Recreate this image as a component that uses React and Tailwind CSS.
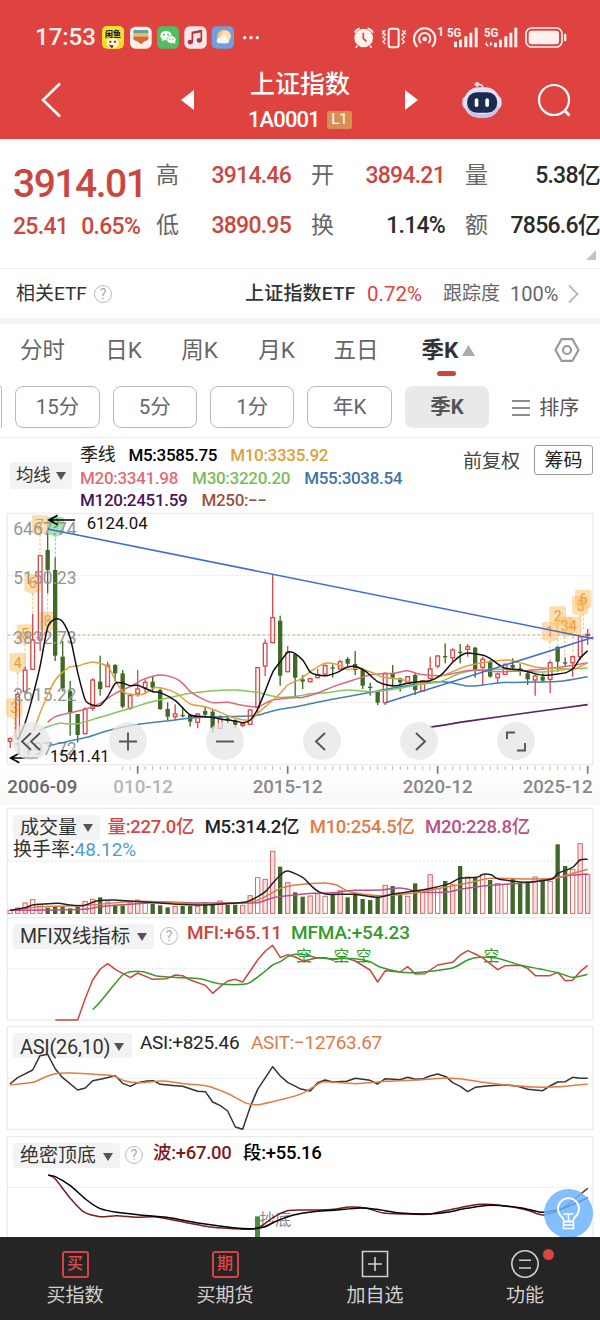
import React, { useState } from 'react';
import { clsx } from 'clsx';

// Chart coordinates are in thirds of a pixel, so every viewBox is 1800 wide.
const STEP = 22.5;
const xAt = (i) => 30.5 + i * STEP;

// [direction, body top, body bottom, high, low]
const CANDLES = [
  ['u', 686, 694, 682, 714], ['u', 553, 684, 545, 690], ['u', 480, 545, 470, 550], ['u', 390, 478, 312, 480],
  ['u', 137, 390, 137, 423], ['d', 120, 180, 70, 250], ['d', 180, 437, 142, 453], ['d', 440, 535, 393, 545],
  ['d', 543, 606, 513, 677], ['d', 612, 675, 612, 697], ['u', 597, 671, 592, 673], ['u', 510, 595, 505, 602],
  ['d', 515, 537, 437, 557], ['u', 466, 530, 455, 530], ['d', 465, 490, 462, 515], ['d', 490, 590, 480, 595],
  ['u', 557, 595, 550, 600], ['u', 537, 550, 480, 560], ['u', 517, 533, 508, 553], ['d', 515, 533, 498, 545],
  ['d', 540, 597, 535, 600], ['d', 597, 620, 577, 630], ['u', 612, 620, 583, 630], ['d', 615, 618, 590, 622],
  ['d', 615, 635, 612, 650], ['u', 612, 637, 610, 655], ['d', 603, 614, 590, 618], ['d', 605, 655, 600, 668],
  ['u', 622, 655, 615, 658], ['d', 625, 632, 615, 640], ['d', 632, 645, 628, 655], ['u', 641, 646, 638, 652],
  ['u', 600, 643, 597, 645], ['u', 473, 593, 471, 610], ['u', 400, 468, 388, 498], ['u', 323, 398, 195, 400],
  ['d', 332, 497, 317, 527], ['u', 427, 485, 408, 487], ['d', 433, 503, 430, 560], ['d', 508, 515, 495, 537],
  ['u', 506, 515, 504, 517], ['u', 495, 503, 477, 505], ['u', 467, 492, 463, 495], ['d', 472, 476, 463, 503],
  ['u', 455, 477, 450, 478], ['d', 447, 461, 441, 468], ['d', 462, 480, 423, 495], ['d', 477, 527, 473, 537],
  ['d', 530, 533, 518, 557], ['d', 543, 578, 543, 585], ['u', 490, 578, 487, 585], ['d', 490, 503, 465, 530],
  ['d', 505, 517, 503, 545], ['u', 500, 520, 498, 520], ['d', 495, 540, 490, 555], ['u', 512, 543, 510, 545],
  ['u', 477, 505, 440, 507], ['u', 438, 468, 436, 475], ['d', 438, 442, 400, 460], ['u', 420, 443, 415, 455],
  ['d', 425, 428, 402, 460], ['u', 410, 418, 402, 440], ['d', 413, 482, 411, 503], ['u', 448, 472, 440, 525],
  ['d', 453, 500, 450, 503], ['u', 492, 503, 488, 520], ['u', 463, 493, 460, 495], ['d', 465, 473, 445, 480],
  ['d', 475, 480, 462, 497], ['d', 490, 508, 487, 525], ['u', 498, 510, 492, 557], ['d', 500, 512, 490, 517],
  ['u', 458, 508, 452, 550], ['d', 410, 455, 410, 485], ['d', 457, 460, 442, 470], ['u', 440, 458, 437, 500],
  ['u', 380, 440, 378, 450], ['u', 373, 377, 357, 405],
];

// top edge of each volume bar, same order as the candles
const VOLUME_TOPS = [
  316, 308, 293, 283, 298, 308, 305, 305, 310, 306, 288, 282, 277, 290, 303, 302, 292, 284, 292, 297,
  301, 307, 303, 303, 303, 303, 292, 299, 287, 299, 299, 300, 271, 217, 222, 138, 185, 232, 262, 275,
  272, 265, 273, 270, 256, 277, 268, 282, 285, 275, 240, 243, 268, 273, 235, 262, 208, 250, 228, 238,
  183, 215, 218, 208, 225, 235, 237, 220, 233, 230, 215, 222, 228, 118, 183, 193, 115, 208,
];

const M5 = [[53, 690], [75, 640], [98, 560], [120, 470], [143, 352], [166, 327], [188, 335], [211, 385], [233, 487], [256, 570], [278, 585], [301, 586], [323, 560], [346, 520], [368, 519], [391, 527], [413, 526], [458, 545], [481, 548], [526, 572], [571, 615], [616, 620], [638, 622], [661, 627], [706, 633], [728, 638], [751, 630], [773, 597], [796, 542], [818, 487], [841, 455], [863, 427], [880, 428], [908, 450], [931, 487], [953, 495], [980, 497], [1010, 488], [1043, 471], [1070, 470], [1098, 485], [1133, 515], [1166, 526], [1190, 527], [1223, 520], [1256, 515], [1290, 512], [1323, 495], [1358, 457], [1385, 435], [1405, 429], [1450, 436], [1471, 446], [1498, 465], [1516, 475], [1561, 480], [1590, 487], [1630, 496], [1673, 492], [1700, 487], [1720, 475], [1740, 445], [1763, 422]];
const M10 = [[100, 665], [120, 610], [143, 555], [166, 510], [188, 487], [211, 470], [233, 468], [278, 456], [323, 470], [346, 510], [368, 545], [391, 553], [413, 555], [436, 550], [458, 535], [481, 533], [526, 548], [571, 582], [616, 590], [661, 607], [706, 625], [751, 630], [773, 610], [796, 590], [841, 550], [863, 525], [900, 508], [931, 485], [975, 460], [1010, 463], [1043, 478], [1070, 475], [1110, 485], [1150, 502], [1200, 508], [1256, 520], [1300, 507], [1358, 485], [1400, 468], [1450, 458], [1520, 450], [1560, 458], [1610, 472], [1673, 475], [1720, 478], [1763, 458]];
const M20 = [[143, 637], [166, 620], [211, 608], [256, 598], [300, 580], [346, 550], [390, 530], [430, 508], [481, 495], [526, 505], [548, 520], [571, 545], [600, 563], [638, 578], [683, 577], [728, 586], [773, 590], [818, 570], [886, 563], [905, 563], [950, 550], [1000, 530], [1060, 510], [1120, 493], [1180, 490], [1223, 482], [1260, 493], [1320, 497], [1370, 488], [1420, 480], [1500, 485], [1600, 480], [1680, 472], [1763, 458]];
const M30 = [[120, 660], [143, 650], [180, 640], [230, 642], [290, 625], [350, 607], [400, 592], [450, 577], [500, 565], [570, 550], [640, 542], [705, 540], [770, 547], [840, 562], [900, 557], [930, 551], [980, 548], [1040, 540], [1120, 545], [1200, 535], [1260, 523], [1320, 515], [1380, 490], [1430, 480], [1520, 478], [1600, 485], [1640, 485], [1700, 478], [1763, 474]];
const M55 = [[143, 708], [200, 695], [260, 682], [320, 663], [400, 645], [500, 633], [600, 622], [680, 620], [770, 616], [800, 608], [840, 598], [900, 588], [960, 575], [1040, 560], [1120, 545], [1200, 530], [1280, 518], [1340, 516], [1400, 528], [1450, 525], [1500, 518], [1600, 516], [1680, 514], [1763, 500]];
const M120 = [[1290, 652], [1400, 634], [1600, 606], [1763, 584]];

const VOL5 = [[30, 316], [75, 308], [98, 300], [130, 297], [175, 295], [210, 300], [250, 302], [290, 288], [340, 285], [390, 288], [450, 292], [520, 297], [600, 300], [680, 296], [740, 290], [773, 275], [796, 260], [818, 235], [841, 210], [863, 198], [908, 217], [931, 240], [953, 258], [980, 268], [1060, 268], [1133, 277], [1180, 267], [1260, 256], [1300, 248], [1350, 235], [1380, 220], [1430, 217], [1450, 208], [1475, 210], [1495, 222], [1580, 232], [1655, 222], [1673, 205], [1718, 187], [1740, 165], [1763, 163]];
const VOL10 = [[30, 316], [120, 305], [200, 303], [300, 298], [380, 290], [480, 290], [580, 296], [700, 295], [760, 290], [796, 275], [841, 250], [886, 240], [930, 236], [975, 234], [1010, 240], [1043, 258], [1090, 268], [1150, 272], [1240, 265], [1320, 250], [1400, 235], [1475, 220], [1600, 222], [1673, 218], [1718, 205], [1763, 193]];
const VOL20 = [[30, 316], [130, 315], [250, 313], [300, 305], [400, 297], [500, 292], [600, 294], [700, 294], [773, 293], [820, 278], [886, 270], [940, 265], [1000, 263], [1060, 256], [1140, 255], [1200, 249], [1260, 260], [1330, 262], [1400, 250], [1480, 240], [1560, 235], [1640, 225], [1700, 212], [1763, 207]];

const MFI = [[166, 645], [233, 645], [256, 580], [278, 525], [301, 492], [323, 476], [346, 493], [391, 518], [413, 504], [458, 523], [500, 521], [526, 510], [548, 512], [571, 525], [616, 541], [638, 565], [661, 545], [683, 528], [706, 523], [728, 531], [773, 465], [796, 438], [818, 421], [841, 458], [863, 449], [886, 456], [910, 468], [953, 458], [975, 458], [998, 465], [1021, 459], [1040, 460], [1066, 468], [1110, 495], [1133, 531], [1156, 497], [1200, 501], [1223, 485], [1246, 507], [1275, 506], [1313, 480], [1358, 472], [1381, 450], [1403, 437], [1426, 447], [1450, 460], [1493, 494], [1516, 482], [1560, 481], [1583, 490], [1606, 512], [1650, 512], [1673, 502], [1696, 527], [1718, 526], [1740, 500], [1763, 481]];
const MFMA = [[278, 614], [301, 590], [346, 535], [368, 510], [391, 500], [430, 500], [470, 513], [520, 517], [600, 521], [638, 532], [670, 538], [730, 538], [751, 532], [790, 503], [818, 480], [841, 470], [863, 455], [886, 448], [920, 450], [950, 458], [1000, 461], [1066, 461], [1110, 470], [1140, 486], [1200, 501], [1240, 503], [1290, 499], [1360, 488], [1403, 465], [1440, 457], [1493, 460], [1560, 480], [1620, 492], [1673, 503], [1718, 517], [1763, 508]];

const ASI = [[30, 177], [53, 158], [98, 135], [120, 92], [143, 88], [166, 132], [188, 158], [233, 195], [256, 189], [278, 167], [301, 163], [346, 152], [368, 175], [391, 184], [413, 173], [440, 168], [460, 167], [481, 178], [526, 182], [548, 184], [593, 199], [616, 200], [638, 231], [661, 242], [683, 258], [706, 306], [728, 313], [751, 245], [773, 193], [818, 125], [841, 153], [863, 172], [900, 191], [931, 198], [953, 173], [975, 165], [998, 171], [1040, 169], [1066, 160], [1110, 166], [1133, 177], [1156, 161], [1200, 164], [1223, 157], [1246, 163], [1270, 161], [1290, 153], [1313, 147], [1338, 155], [1358, 173], [1381, 184], [1403, 200], [1426, 187], [1460, 183], [1510, 179], [1550, 183], [1583, 193], [1628, 197], [1650, 183], [1673, 171], [1696, 170], [1718, 157], [1740, 160], [1763, 160]];
const ASIT = [[30, 180], [98, 172], [143, 153], [175, 145], [210, 144], [300, 149], [340, 153], [375, 168], [420, 173], [490, 168], [560, 177], [620, 183], [680, 204], [740, 235], [775, 239], [810, 232], [900, 208], [950, 180], [975, 170], [1066, 176], [1160, 169], [1250, 165], [1330, 160], [1380, 161], [1450, 172], [1520, 180], [1600, 186], [1680, 185], [1763, 177]];

const WAVE = [[145, 450], [166, 462], [211, 520], [250, 560], [300, 575], [350, 572], [410, 577], [470, 576], [560, 593], [630, 606], [700, 611], [750, 613], [780, 606], [820, 577], [860, 558], [900, 555], [950, 555], [1000, 553], [1050, 546], [1100, 550], [1150, 564], [1220, 567], [1280, 568], [1320, 560], [1380, 548], [1440, 538], [1510, 542], [1580, 555], [1628, 570], [1680, 555], [1720, 525], [1763, 490]];
const SEGMENT = [[145, 450], [166, 455], [211, 482], [260, 525], [301, 551], [350, 562], [420, 570], [500, 577], [600, 595], [700, 608], [750, 611], [790, 607], [830, 588], [880, 570], [940, 560], [1000, 556], [1080, 549], [1130, 553], [1200, 564], [1290, 567], [1340, 562], [1400, 550], [1470, 541], [1560, 548], [1628, 562], [1680, 553], [1720, 538], [1763, 518]];

// [label, x, y, stem end]
const MARKS = [
  ['3', 43, 594, 680], ['4', 53, 458, 545], ['5', 75, 372, 470], ['6', 98, 220, 312],
  ['7', 120, 44, 137], ['8', 143, 334, 250], ['1', 1650, 365, 452], ['2', 1673, 318, 410],
  ['3', 1694, 349, 442], ['4', 1719, 349, 437], ['5', 1741, 287, 378], ['6', 1750, 268, 357],
];

const smooth = (pts) => {
  let d = `M${pts[0][0]} ${pts[0][1]}`;
  for (let i = 0; i < pts.length - 1; i++) {
    const a = pts[i - 1] || pts[i];
    const b = pts[i];
    const c = pts[i + 1];
    const e = pts[i + 2] || c;
    d += `C${b[0] + (c[0] - a[0]) / 8} ${b[1] + (c[1] - a[1]) / 8} ${c[0] - (e[0] - b[0]) / 8} ${c[1] - (e[1] - b[1]) / 8} ${c[0]} ${c[1]}`;
  }
  return d;
};

const straight = (pts) => 'M' + pts.map((p) => p.join(' ')).join('L');

const Line = ({ pts, color, width = 4.5, sharp }) => (
  <path d={sharp ? straight(pts) : smooth(pts)} fill="none" stroke={color} strokeWidth={width} strokeLinejoin="round" />
);

const GridLine = ({ y }) => <path d={`M22 ${y}H1778`} stroke="#e2e2e2" strokeWidth="3" strokeDasharray="6 6" />;

const AppIcons = () => (
  <svg viewBox="300 66 500 84" className="h-7 w-[166.7px]">
    <rect x="306" y="75" width="66" height="68" rx="15" fill="#f5e334" />
    <path d="M308 131c0-22 60-24 62 0q-6 13-31 12-25 1-31-12z" fill="#ffd21f" />
    <ellipse cx="338" cy="126" rx="19" ry="16" fill="#fff5cf" />
    <text x="339" y="107" fontSize="24" fontWeight="900" textAnchor="middle" fill="#222">闲鱼</text>
    <circle cx="331" cy="122" r="3" fill="#222" />
    <circle cx="345" cy="122" r="3" fill="#222" />
    <path d="M326 130q10 6 16 2l-5 9q-6 0-11-11z" fill="#5a2a12" />
    <rect x="390" y="77" width="65" height="66" rx="16" fill="#fdeee7" />
    <rect x="400" y="87" width="45" height="10" rx="3" fill="#5aa5a3" />
    <path d="M400 96h45v14h-45z" fill="#f1b765" />
    <path d="M400 107h45v8q-3 4-11 6l-11 9-11-9q-9-2-12-6z" fill="#d3683c" />
    <rect x="471" y="76" width="66" height="67" rx="15" fill="#52bd62" />
    <ellipse cx="498" cy="104" rx="17" ry="14" fill="#fff" />
    <path d="M487 113l-1 8 9-5z" fill="#fff" />
    <ellipse cx="514" cy="116" rx="14" ry="11.500" fill="#fff" stroke="#52bd62" strokeWidth="2" />
    <path d="M520 124l6 6-1-9z" fill="#fff" />
    <g fill="#3f9f4e">
      <circle cx="492" cy="101" r="2.500" />
      <circle cx="504" cy="101" r="2.500" />
      <circle cx="510" cy="114" r="2" />
      <circle cx="519" cy="114" r="2" />
    </g>
    <rect x="553" y="76" width="67" height="67" rx="16" fill="#fbe7ea" />
    <path d="M577 122V94l27-5v28" fill="none" stroke="#b8343f" strokeWidth="5" />
    <path d="M577 99l27-5v-6l-27 5z" fill="#b8343f" />
    <ellipse cx="571" cy="123" rx="8" ry="7" fill="#b8343f" />
    <ellipse cx="598" cy="118" rx="8" ry="7" fill="#b8343f" />
    <rect x="635" y="76" width="67" height="67" rx="15" fill="#6f9fe0" />
    <circle cx="672" cy="107" r="21" fill="#f4c272" />
    <circle cx="677" cy="104" r="15" fill="#fbe0ab" />
    <path d="M655 127a9 9 0 0 1 3-17 13 13 0 0 1 24 3 8 8 0 0 1 1 14z" fill="#f3f4f8" />
    <circle cx="734" cy="110" r="5" fill="#fff" />
    <circle cx="753" cy="110" r="5" fill="#fff" />
    <circle cx="772" cy="110" r="5" fill="#fff" />
  </svg>
);

const SystemIcons = () => (
  <svg viewBox="150 66 660 84" className="h-7 w-[220px]" fill="#fff1f0">
    <circle cx="191" cy="111" r="28" />
    <path d="M190 95v17l9 9" fill="none" stroke="#de433f" strokeWidth="5" />
    <path d="M164 95q4-10 15-13M203 82q12 3 16 13M172 134l-5 6M210 134l5 6" fill="none" stroke="#fff1f0" strokeWidth="5" />
    <rect x="266" y="83" width="30" height="56" rx="7" fill="none" stroke="#fff1f0" strokeWidth="6" />
    <path d="M256 88l-7 6 7 7-7 7 7 7-7 7 7 7M247 88l4 6-4 6M306 88l7 6-7 7 7 7-7 7 7 7-7 7M317 88l-4 6 4 6" fill="none" stroke="#fff1f0" strokeWidth="4" />
    <circle cx="374" cy="114" r="7" />
    <path d="M363 126a17 17 0 1 1 22 0M352 137a32 32 0 1 1 44 0" fill="none" stroke="#fff1f0" strokeWidth="6" />
    <text x="411" y="104" fontSize="38" fontWeight="700">1</text>
    <text x="441" y="108" fontSize="39" fontWeight="700" textLength="43" lengthAdjust="spacingAndGlyphs">5G</text>
    <path d="M462 122h9v17h-9zM477 116h9v23h-9zM493 106h9v33h-9zM508 95h9v44h-9zM524 80h9v59h-9z" />
    <text x="552" y="108" fontSize="39" fontWeight="700" textLength="43" lengthAdjust="spacingAndGlyphs">5G</text>
    <path d="M555 130h10v9zM561 120v12h-7zM570 122l8 7-8 7zM582 125h9v14h-9zM597 116h9v23h-9zM613 106h9v33h-9zM628 95h9v44h-9zM643 80h9v59h-9z" />
    <rect x="678" y="81" width="108" height="57" rx="17" fill="none" stroke="#fff1f0" strokeWidth="5" />
    <rect x="686" y="89" width="91" height="41" rx="9" />
    <rect x="792" y="98" width="7" height="23" rx="3" />
  </svg>
);

const Robot = () => (
  <svg viewBox="0 0 120 112" className="h-[37px] w-10">
    <path d="M62 18q0-12-12-10" fill="none" stroke="#f3dfe6" strokeWidth="5" />
    <circle cx="45" cy="7" r="7" fill="#f5e3e8" />
    <ellipse cx="9" cy="62" rx="9" ry="18" fill="#d5d3f2" />
    <ellipse cx="111" cy="62" rx="9" ry="18" fill="#d5d3f2" />
    <rect x="5" y="16" width="110" height="92" rx="45" fill="#e3e3f8" />
    <path d="M12 68q4 40 50 40t48-40q-8 30-48 30t-50-30z" fill="#c3c2f2" />
    <rect x="15" y="31" width="91" height="62" rx="29" fill="#1d2b50" />
    <rect x="38" y="49" width="11" height="27" rx="5.500" fill="#fff" />
    <rect x="70" y="49" width="11" height="27" rx="5.500" fill="#fff" />
  </svg>
);

const Header = () => (
  <header className="h-[139px] bg-[#de433f] text-white">
    <div className="flex h-16 items-center pt-[9px]">
      <span className="ml-[35px] w-[65px] text-[24px] leading-none font-medium text-[#fff1f0]">17:53</span>
      <AppIcons />
      <div className="ml-auto pr-[30px]">
        <SystemIcons />
      </div>
    </div>
    <div className="flex h-[72px] items-center pl-[41px]">
      <svg viewBox="0 0 20 36" className="h-9 w-5" fill="none" stroke="white" strokeWidth="2.600">
        <path d="M19 1.500 2 18l17 16.500" />
      </svg>
      <svg viewBox="0 0 13 20" className="ml-[120px] h-5 w-[13px]" fill="white">
        <path d="M13 0v20L0 10z" />
      </svg>
      <div className="ml-[46px] flex w-[120px] flex-col items-center pt-[5px]">
        <h1 className="text-[25px] leading-9 font-medium">上证指数</h1>
        <div className="flex h-9 w-[104px] items-center justify-between pb-[2px]">
          <span className="pt-px text-[22px] leading-none font-medium tracking-[-0.9px]">1A0001</span>
          <span className="flex h-[18px] w-[25px] items-center justify-center rounded-[2px] bg-[#d88f53] text-[15px] leading-none">L1</span>
        </div>
      </div>
      <svg viewBox="0 0 13 20" className="ml-[45px] h-5 w-[13px]" fill="white">
        <path d="M0 0v20l13-10z" />
      </svg>
      <div className="ml-11">
        <Robot />
      </div>
      <svg viewBox="0 0 35 35" className="ml-[35px] h-[35px] w-[35px]" fill="none" stroke="white" strokeWidth="2.200">
        <circle cx="17" cy="17" r="15" />
        <path d="m27 27 5.500 5.500" strokeWidth="2.800" />
      </svg>
    </div>
  </header>
);

const QUOTES = [
  [
    { label: '高', value: '3914.46', up: true },
    { label: '低', value: '3890.95', up: true },
  ],
  [
    { label: '开', value: '3894.21', up: true },
    { label: '换', value: '1.14%' },
  ],
  [
    { label: '量', value: '5.38亿' },
    { label: '额', value: '7856.6亿' },
  ],
];

const Quote = () => (
  <section className="h-[129px] bg-white pt-3">
    <div className="flex h-[99px]">
      <div className="w-[156px] pl-[13px] font-medium text-[#ca473f]">
        <div className="h-[53px] pt-[14px] text-[39px] leading-[39px] tracking-[-1.5px]">3914.01</div>
        <div className="flex h-[47px] items-center gap-[13px] text-[23px] tracking-[-0.7px]">
          <span>25.41</span>
          <span>0.65%</span>
        </div>
      </div>
      <div className="flex gap-5">
        {QUOTES.map((col, i) => (
          <div key={i} className={i === 1 ? 'w-[134px]' : 'w-[135px]'}>
            {col.map((q) => (
              <div key={q.label} className="flex h-[50px] items-center justify-between">
                <span className="text-[23px] text-[#666]">{q.label}</span>
                <span
                  className={clsx(
                    'pt-px text-[23px] font-medium tracking-[-0.75px]',
                    q.up ? 'text-[#ca473f]' : 'text-[#2b2b2b]'
                  )}
                >
                  {q.value}
                </span>
              </div>
            ))}
          </div>
        ))}
      </div>
    </div>
    <svg viewBox="0 0 10 10" className="ml-[586px] h-[10px] w-[10px]" fill="#c4c4c4">
      <path d="M10 0v10H0z" />
    </svg>
  </section>
);

const Help = () => (
  <span className="flex h-[18px] w-[18px] items-center justify-center rounded-full border border-[#bbb] text-[14px] leading-none font-normal text-[#aaa]">
    ?
  </span>
);

const EtfRow = () => (
  <section className="flex h-[50px] items-center border-t border-[#eee] bg-white pt-px pl-4 text-[19px] whitespace-nowrap text-[#333]">
    <span className="w-[78px]">相关ETF</span>
    <Help />
    <span className="ml-[133px] w-[122px] font-medium tracking-[0.2px]">上证指数ETF</span>
    <span className="w-[76px] text-[20.500px] text-[#de433f]">0.72%</span>
    <span className="w-[67px] text-[#666]">跟踪度</span>
    <span className="w-[58px] text-[20px] text-[#666]">100%</span>
    <svg viewBox="0 0 11 20" className="h-5 w-[11px]" fill="none" stroke="#bbb" strokeWidth="2">
      <path d="m1 1.500 8.500 8.500L1 18.500" />
    </svg>
  </section>
);

const TABS = [
  { name: '分时', width: 'w-[85px]' },
  { name: '日K', width: 'w-[77px]' },
  { name: '周K', width: 'w-[75px]' },
  { name: '月K', width: 'w-[79px]' },
  { name: '五日', width: 'w-[80px]' },
  { name: '季K', width: 'w-[105px]' },
];
const PERIODS = ['15分', '5分', '1分', '年K', '季K'];

const PeriodTabs = () => {
  const [active, setActive] = useState('季K');

  return (
    <section className="h-[114px] border-b border-[#eee] bg-white">
      <div className="flex h-[56px] items-start">
        {TABS.map((tab) => (
          <button
            key={tab.name}
            onClick={() => setActive(tab.name)}
            className={clsx(
              'flex flex-col items-center text-[22.500px]',
              tab.width,
              tab.name === active ? 'font-bold text-[#333]' : 'text-[#666]'
            )}
          >
            <span className="flex h-[47px] items-center gap-[4px] pt-[6px]">
              {tab.name}
              {tab.name === '季K' && (
                <svg viewBox="0 0 13 11" className="h-[11px] w-[13px]" fill="#aaa">
                  <path d="M6.500 0 13 11H0z" />
                </svg>
              )}
            </span>
            {tab.name === active && <span className="mr-[4px] h-[5px] w-[19px] rounded-full bg-[#ca473f]" />}
          </button>
        ))}
        <svg viewBox="0 0 26 24" className="mt-[14px] ml-[53px] h-6 w-[26px]" fill="none" stroke="#999" strokeWidth="2.200">
          <path d="M7.500 1.200h11L24.500 12l-6 10.800h-11L1.500 12z" strokeLinejoin="round" />
          <circle cx="13" cy="12" r="4" />
        </svg>
      </div>
      <div className="flex h-[54px] items-start gap-[12.900px] overflow-hidden pt-[6px]">
        <span className="h-[42px] w-[2.300px] shrink-0 rounded-r-lg border border-l-0 border-[#bbb]" />
        {PERIODS.map((p) => (
          <button
            key={p}
            onClick={() => setActive(p)}
            className={clsx(
              'h-[42px] w-[84.500px] shrink-0 rounded-lg pt-px text-[20.500px]',
              p === active ? 'bg-[#e9e9e9] font-bold text-[#555]' : 'border border-[#bbb] text-[#666]'
            )}
          >
            {p}
          </button>
        ))}
        <button className="ml-[10px] flex h-[42px] items-center gap-[9px] pt-px text-[20px] text-[#555]">
          <svg viewBox="0 0 18 16" className="h-4 w-[18px]" stroke="#666" strokeWidth="1.600">
            <path d="M0 1h18M0 8h18M0 15h18" />
          </svg>
          排序
        </button>
      </div>
    </section>
  );
};

const Picker = ({ label, className }) => (
  <button className={clsx('flex shrink-0 items-center justify-between rounded-[3px] bg-[#f2f2f2]/90 whitespace-nowrap text-[#333]', className)}>
    {label}
    <svg viewBox="0 0 10 8" className="h-2 w-[10px]" fill="#555">
      <path d="M0 0h10L5 8z" />
    </svg>
  </button>
);

const MaLegend = () => (
  <div className="flex h-[72px] bg-white pl-[10px] text-[17px] font-medium tracking-[-0.3px] whitespace-nowrap">
    <Picker label="均线" className="mt-6 h-[27px] w-[62px] px-[6px] text-[17.500px] font-normal" />
    <div className="ml-2 w-[383px] pt-[6px] leading-[22.500px]">
      <div className="flex gap-[13px]">
        <span className="text-[18px] font-normal text-[#222]">季线</span>
        <span className="text-black">M5:3585.75</span>
        <span className="text-[#dda03c]">M10:3335.92</span>
      </div>
      <div className="flex gap-[14px]">
        <span className="text-[#e06c78]">M20:3341.98</span>
        <span className="text-[#7cbb5a]">M30:3220.20</span>
        <span className="text-[#4173a5]">M55:3038.54</span>
      </div>
      <div className="flex gap-[14px]">
        <span className="text-[#48155a]">M120:2451.59</span>
        <span className="text-[#9b523c]">M250:−−</span>
      </div>
    </div>
    <span className="pt-[10px] text-[19px] leading-7 font-normal tracking-normal text-[#444]">前复权</span>
    <button className="mt-[7px] ml-[14px] h-[30px] w-[59px] rounded-[3px] border border-[#999] pt-px text-[19px] leading-none font-normal tracking-normal text-[#222]">
      筹码
    </button>
  </div>
);

const Candle = ({ i, dir, top, bottom, high, low }) => {
  const x = xAt(i);
  const h = Math.max(bottom - top, 4);
  return dir === 'u' ? (
    <g stroke="#d94a4a" strokeWidth="4" fill="none">
      <path d={`M${x} ${high}V${top}M${x} ${top + h}V${low}`} />
      <rect x={x - 5.5} y={top} width="11" height={h} />
    </g>
  ) : (
    <g fill="#3f6a26">
      <rect x={x - 2} y={high} width="4" height={low - high} />
      <rect x={x - 6.5} y={top} width="13" height={h} />
    </g>
  );
};

const Mark = ({ label, x, y, stem }) => (
  <g>
    <path d={`M${x} ${y + 30}V${stem}`} stroke="#f2c47c" strokeWidth="3" strokeDasharray="8 5" />
    <path
      d={`M${x - 19} ${y - 29}h38q6 0 6 6v42q0 6-6 7l-12 3-7 6-7-6-12-3q-6-1-6-7v-42q0-6 6-6z`}
      fill="#f9bd5d"
      fillOpacity="0.480"
    />
    <text x={x} y={y + 15} fontSize="42" textAnchor="middle" fill="#ec9a3e">{label}</text>
  </g>
);

const AXIS_LABELS = [['6467.74', 74], ['5150.23', 223], ['3832.73', 403], ['2615.22', 574], ['1197.72', 735]];
const DATES = [['2006-09', 22, 210, '#666'], ['010-12', 340, 179, '#b5b5b5'], ['2015-12', 758, 210, '#888'], ['2020-12', 1208, 210, '#888'], ['2025-12', 1568, 210, '#888']];

const CONTROLS = [
  'M19 11 10 19.500l9 8.500M28 11l-9 8.500 9 8.500',
  'M10 19.500h18M19 10.500v18',
  'M10 19.500h18',
  'M22 11l-9 8.500 9 8.500',
  'M16 11l9 8.500-9 8.500',
  'M10 17v-6.500h8M28 21v7.500h-8',
];

const MainChart = () => (
  <div className="grid h-[295px] bg-white">
    <svg viewBox="0 0 1800 885" className="col-start-1 row-start-1 h-[295px] w-[600px]">
      <defs>
        <linearGradient id="axisFade" x1="0" y1="0" x2="0" y2="1">
          <stop offset="0" stopColor="#fff" />
          <stop offset="1" stopColor="#f8f8f8" />
        </linearGradient>
      </defs>
      <rect x="0" y="768" width="1800" height="117" fill="url(#axisFade)" />
      <rect x="22" y="10" width="1757" height="754" fill="#fff" stroke="#ececec" strokeWidth="4" />
      {[197, 386, 577].map((y) => (
        <GridLine key={y} y={y} />
      ))}
      <path d="M22 375H1778" stroke="#d3bfa0" strokeWidth="4" strokeDasharray="9 6" />
      {MARKS.map(([label, x, y, stem], i) => (
        <Mark key={i} label={label} x={x} y={y} stem={stem} />
      ))}
      <path d="M166 85V142" stroke="#7fd28c" strokeWidth="3" strokeDasharray="8 5" />
      <path d="M141 27q0-6 6-6h39q6 0 6 6v40q0 6-6 7l-13 3-7 7-7-7-12-3q-6-1-6-7z" fill="#6fd07e" fillOpacity="0.600" />
      <text x="166" y="54" fontSize="42" textAnchor="middle" fill="#36b34c">9</text>
      {CANDLES.map(([dir, top, bottom, high, low], i) => (
        <Candle key={i} i={i} dir={dir} top={top} bottom={bottom} high={high} low={low} />
      ))}
      <g fontSize="53" fill="#959595">
        {AXIS_LABELS.map(([label, y]) => (
          <text key={label} x="40" y={y} textLength="190" lengthAdjust="spacingAndGlyphs">{label}</text>
        ))}
      </g>
      <Line pts={M120} color="#4d2560" width={5} />
      <Line pts={M55} color="#4580b0" />
      <Line pts={M30} color="#84c75e" />
      <Line pts={M20} color="#e0667a" />
      <Line pts={M10} color="#e0a03c" />
      <Line pts={M5} color="#111" />
      <path d="M143 57 1780 386M1156 578 1780 382" stroke="#426bd2" strokeWidth="4.500" />
      <path d="M225 30H148M173 16 147 30l26 14" fill="none" stroke="#000" strokeWidth="5" />
      <path d="M113 744H33M58 730 32 744l26 14" fill="none" stroke="#000" strokeWidth="5" />
      <text x="260" y="58" fontSize="50" textLength="183" lengthAdjust="spacingAndGlyphs" fill="#111">6124.04</text>
      <text x="150" y="757" fontSize="50" textLength="178" lengthAdjust="spacingAndGlyphs" fill="#111">1541.41</text>
      {CANDLES.map((_, i) => {
        if (i < 15) return null;
        const major = (i - 17) % 20 === 0;
        return <path key={i} d={`M${xAt(i)} 768v${major ? 23 : 12}`} stroke={major ? '#777' : '#bbb'} strokeWidth={major ? 5 : 3} />;
      })}
      {DATES.map(([label, x, len, color]) => (
        <text key={label} x={x} y="850" fontSize="53" fontWeight="500" textLength={len} lengthAdjust="spacingAndGlyphs" fill={color}>
          {label}
        </text>
      ))}
    </svg>
    <div className="col-start-1 row-start-1 mt-[212px] flex h-[38px] gap-[59px] pl-[12px]">
      {CONTROLS.map((d) => (
        <button key={d} className="h-[38px] w-[38px] rounded-full bg-[#e6e6e6]/75">
          <svg viewBox="0 0 38 38" className="h-[38px] w-[38px]" fill="none" stroke="#555" strokeWidth="1.900">
            <path d={d} />
          </svg>
        </button>
      ))}
    </div>
  </div>
);

const VolumePanel = () => (
  <div className="grid h-[112px] bg-white">
    <svg viewBox="0 0 1800 336" className="col-start-1 row-start-1 h-[112px] w-[600px]">
      <path d="M22 336V10H1779V336" fill="none" stroke="#ececec" strokeWidth="4" />
      <GridLine y={168} />
      {VOLUME_TOPS.map((top, i) =>
        CANDLES[i][0] === 'u' ? (
          <rect key={i} x={xAt(i) - 6.5} y={top + 1} width="13" height={324 - top} fill={i % 3 ? '#f9dfdf' : '#fff'} stroke="#d86666" strokeWidth="3" />
        ) : (
          <rect key={i} x={xAt(i) - 6.5} y={top} width="13" height={327 - top} fill="#41672a" />
        )
      )}
      <Line pts={VOL20} color="#b84f86" />
      <Line pts={VOL10} color="#e07b48" />
      <Line pts={VOL5} color="#222" />
    </svg>
    <div className="col-start-1 row-start-1 pt-[10px] pl-[13px] text-[19px] leading-[25px] whitespace-nowrap">
      <div className="flex h-[23px] items-center gap-[10.500px] pt-[2px] text-[18.500px] font-medium tracking-[-0.3px]">
        <Picker label="成交量" className="h-[25px] w-[87px] pr-[7px] pl-[7px] text-[19px] font-normal tracking-normal" />
        <span className="-ml-[3px] text-[#d64843]">量:227.0亿</span>
        <span className="text-[#222]">M5:314.2亿</span>
        <span className="text-[#e07b48]">M10:254.5亿</span>
        <span className="text-[#b84f86]">M20:228.8亿</span>
      </div>
      <div className="leading-[23px] text-[#333]">
        换手率:<span className="text-[#509bdc]">48.12%</span>
      </div>
    </div>
  </div>
);

const MfiPanel = () => (
  <div className="grid h-[108px] bg-white">
    <svg viewBox="0 336 1800 324" className="col-start-1 row-start-1 h-[108px] w-[600px]">
      <rect x="22" y="338" width="1757" height="307" fill="none" stroke="#ececec" strokeWidth="4" />
      <GridLine y={491} />
      <Line pts={MFI} color="#cc4641" sharp />
      <Line pts={MFMA} color="#359a2d" />
      {[912, 1024, 1091, 1474].map((x) => (
        <g key={x}>
          <text x={x} y="468" fontSize="46" textAnchor="middle" fill="#359a2d">空</text>
          <path d={`M${x - 22} 471h44`} stroke="#359a2d" strokeWidth="3" strokeDasharray="12 4" />
        </g>
      ))}
    </svg>
    <div className="col-start-1 row-start-1 flex items-start pt-[7px] pl-[13px] text-[19px] font-medium tracking-[-0.15px] whitespace-nowrap">
      <Picker label="MFI双线指标" className="h-[25px] w-[141px] px-[7px] text-[19.500px] font-normal" />
      <span className="mt-[3px] ml-[6px]">
        <Help />
      </span>
      <span className="-mt-[5px] ml-[9px] w-[104px] leading-7 text-[#cc4641]">MFI:+65.11</span>
      <span className="-mt-[5px] leading-7 text-[#359a2d]">MFMA:+54.23</span>
    </div>
  </div>
);

const AsiPanel = () => (
  <div className="grid h-[108px] bg-white">
    <div className="col-start-1 row-start-1 flex items-start pt-2 pl-[13px] text-[19px] tracking-[-0.3px] whitespace-nowrap">
      <Picker label="ASI(26,10)" className="h-[25px] w-[119px] pt-[3px] pr-[8px] pl-[7px] text-[20px] tracking-[-0.3px]" />
      <span className="-mt-1 ml-2 w-[111px] leading-7 text-[#222]">ASI:+825.46</span>
      <span className="-mt-1 leading-7 text-[#e07b48]">ASIT:−12763.67</span>
    </div>
    <svg viewBox="0 0 1800 324" className="col-start-1 row-start-1 h-[108px] w-[600px]">
      <rect x="22" y="5" width="1757" height="308" fill="none" stroke="#ececec" strokeWidth="4" />
      <GridLine y={160} />
      <Line pts={ASI} color="#333" sharp />
      <Line pts={ASIT} color="#e07b48" />
    </svg>
  </div>
);

const TopBottomPanel = () => (
  <div className="relative grid h-[104px] bg-white">
    <svg viewBox="0 324 1800 312" className="col-start-1 row-start-1 h-[104px] w-[600px]">
      <path d="M22 636V335H1779V636" fill="none" stroke="#ececec" strokeWidth="4" />
      <GridLine y={487} />
      <text x="778" y="599" fontSize="48" fill="#888">抄底</text>
      <rect x="765" y="574" width="15" height="62" fill="#45923a" />
      <Line pts={WAVE} color="#7a1c1c" />
      <Line pts={SEGMENT} color="#000" />
    </svg>
    <div className="col-start-1 row-start-1 flex items-start pt-[10px] pl-[13px] text-[18.500px] font-medium tracking-[-0.3px] whitespace-nowrap">
      <Picker label="绝密顶底" className="h-[25px] w-[107px] px-[7px] pt-[2px] text-[19px] font-normal tracking-normal" />
      <span className="mt-[3px] ml-[5px]">
        <Help />
      </span>
      <span className="-mt-1 ml-[10px] w-[90px] leading-7 text-[#7a1c1c]">波:+67.00</span>
      <span className="-mt-1 leading-7 text-black">段:+55.16</span>
    </div>
    <button className="absolute right-[7px] bottom-[-1px] h-[49px] w-[49px] rounded-full bg-[#6db4fb]/85">
      <svg viewBox="0 0 49 49" className="h-[49px] w-[49px]" fill="none" stroke="white" strokeWidth="1.900">
        <path d="M20 32.500q-.2-3-2.500-5a10.500 10.500 0 1 1 14 0q-2.300 2-2.500 5z" />
        <path d="M19.500 33v6.500h10V33M19.500 36h10M19.500 25h10M24.500 25v7.500" strokeWidth="1.600" />
      </svg>
    </button>
  </div>
);

const BoxedChar = ({ char }) => (
  <span className="flex h-[27px] w-[27px] items-center justify-center rounded-[3px] border-2 border-[#d64340] text-[16px] leading-none font-medium text-[#e04845]">
    {char}
  </span>
);

const NAV_ITEMS = [
  { label: '买指数', icon: <BoxedChar char="买" /> },
  { label: '买期货', icon: <BoxedChar char="期" /> },
  {
    label: '加自选',
    icon: (
      <svg viewBox="0 0 28 28" className="h-7 w-7" fill="none" stroke="#d0d0d0" strokeWidth="1.600">
        <path d="M1.500 1.500h25v25h-25zM7 14h14M14 7v14" />
      </svg>
    ),
  },
  {
    label: '功能',
    dot: true,
    icon: (
      <svg viewBox="0 0 28 28" className="h-7 w-7" fill="none" stroke="#d0d0d0" strokeWidth="1.600">
        <circle cx="14" cy="14" r="13.200" />
        <path d="M8 10.200h12M8 18h12" />
      </svg>
    ),
  },
];

const BottomNav = () => (
  <nav className="relative grid h-[83px] grid-cols-4 bg-[#252525] pt-[13px]">
    {NAV_ITEMS.map((item) => (
      <button key={item.label} className="flex flex-col items-center">
        <span className="relative flex h-7 items-center">
          {item.icon}
          {item.dot && <span className="absolute -top-[1px] -right-[15px] h-[11px] w-[11px] rounded-full bg-[#d9463f]" />}
        </span>
        <span className="mt-[3px] text-[19px] leading-[29px] text-[#d0d0d0]">{item.label}</span>
      </button>
    ))}
  </nav>
);

const App = () => (
  <div className="h-[1320px] w-[600px] overflow-hidden bg-white font-[family-name:Roboto,'Noto_Sans_CJK_SC',sans-serif]">
    <Header />
    <Quote />
    <EtfRow />
    <div className="h-[6px] bg-[#f4f4f4]" />
    <PeriodTabs />
    <MaLegend />
    <MainChart />
    <VolumePanel />
    <MfiPanel />
    <AsiPanel />
    <TopBottomPanel />
    <BottomNav />
  </div>
);

export default App;
